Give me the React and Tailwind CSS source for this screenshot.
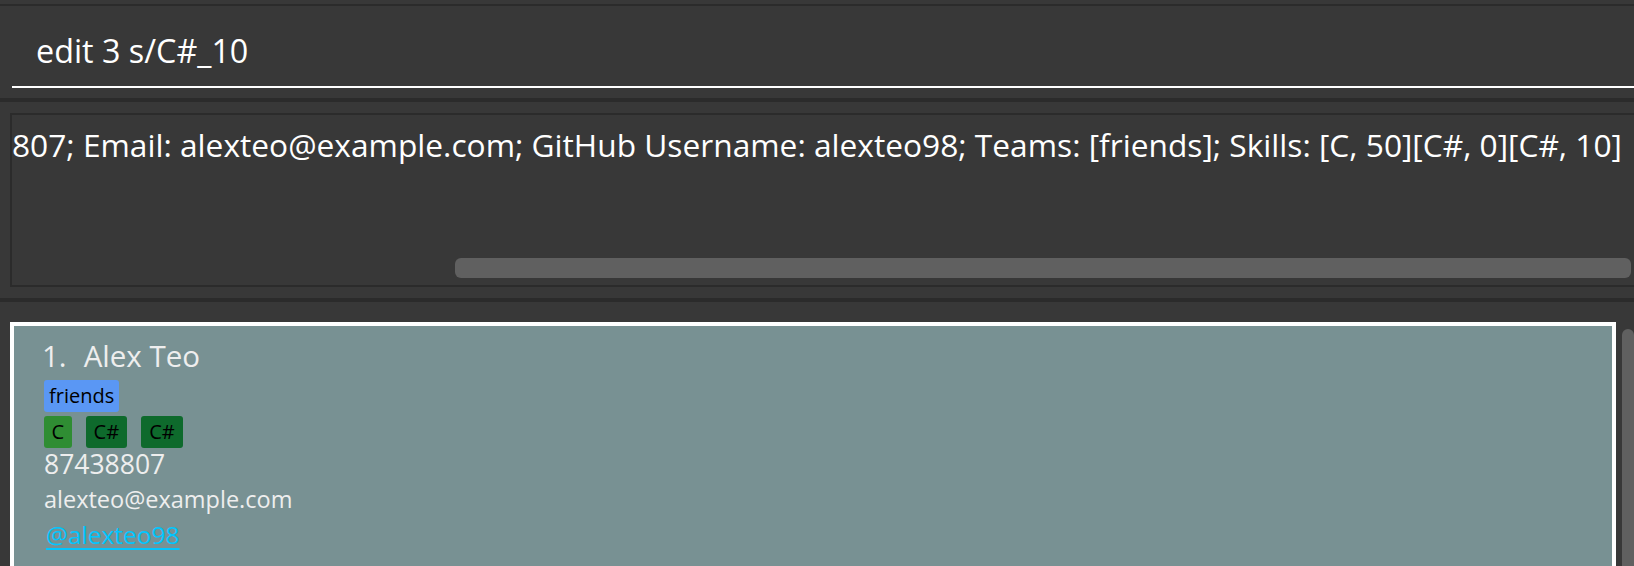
import React from "react";

function Tag({ children, color, pad }) {
  return (
    <span className={`inline-flex h-[32px] items-center rounded-[3px] text-[20px] leading-[28px] text-black ${pad} ${color}`}>
      {children}
    </span>
  );
}

export default function App() {
  return (
    <div className="flex h-[566px] w-[1634px] flex-col overflow-hidden bg-[#383838] font-['Open_Sans',sans-serif] text-white">
      {/* top edge */}
      <div className="h-[4px] shrink-0" />
      <div className="h-[2px] shrink-0 bg-[#2b2b2b]" />

      {/* command box */}
      <div className="h-[92px] shrink-0 pl-[12px]">
        <div className="h-[82px] border-b-2 border-white pl-[24px] pt-[22px] text-[32.3px] leading-[44px] whitespace-pre">
          edit 3 s/C#_10
        </div>
      </div>
      <div className="h-[4px] shrink-0 bg-[#2b2b2b]" />

      {/* result display */}
      <div className="h-[196px] shrink-0 pl-[10px] pt-[11px]">
        <div className="flex h-[174px] flex-col overflow-hidden border-2 border-r-0 border-[#2b2b2b]">
          <div className="whitespace-pre pt-[8px] text-[31.7px] leading-[43px]">
            807; Email: alexteo@example.com; GitHub Username: alexteo98; Teams: [friends]; Skills: [C, 50][C#, 0][C#, 10]
          </div>
          <div className="flex-1" />
          <div className="mb-[7px] ml-[443px] mr-[3px] h-[20px] rounded-[6px] bg-[#606060]" />
        </div>
      </div>
      <div className="h-[4px] shrink-0 bg-[#2b2b2b]" />

      {/* person list */}
      <div className="flex flex-1 gap-[6px] overflow-hidden pl-[10px] pt-[20px]">
        <div className="h-[320px] w-[1606px] shrink-0 border-4 border-white bg-[#789193] pl-[30px] pt-[14px] text-[#eeeeee]">
          <div className="-ml-[2px] flex text-[29.5px] leading-[32px]">
            <span>1.</span>
            <span className="ml-[17px]">Alex Teo</span>
          </div>
          <div className="mt-[8px] flex">
            <Tag color="bg-[#5a97f4]" pad="px-[5px]">friends</Tag>
          </div>
          <div className="mt-[4px] flex gap-[14px]">
            <Tag color="bg-[#2f8d33]" pad="px-[7.5px]">C</Tag>
            <Tag color="bg-[#0e6a2c]" pad="px-[8px]">C#</Tag>
            <Tag color="bg-[#0e6a2c]" pad="px-[8px]">C#</Tag>
          </div>
          <div className="mt-[1px] text-[26.5px] leading-[30px]">87438807</div>
          <div className="mt-[5px] text-[23.5px] leading-[30px]">alexteo@example.com</div>
          <div className="mt-[6px] ml-[2px] text-[24.5px] leading-[30px]">
            <a className="text-[#00c6ff] underline decoration-2 underline-offset-[4px]">@alexteo98</a>
          </div>
        </div>
        <div className="mt-[7px] h-[300px] w-[12px] shrink-0 rounded-t-[6px] bg-[#606060]" />
      </div>
    </div>
  );
}
